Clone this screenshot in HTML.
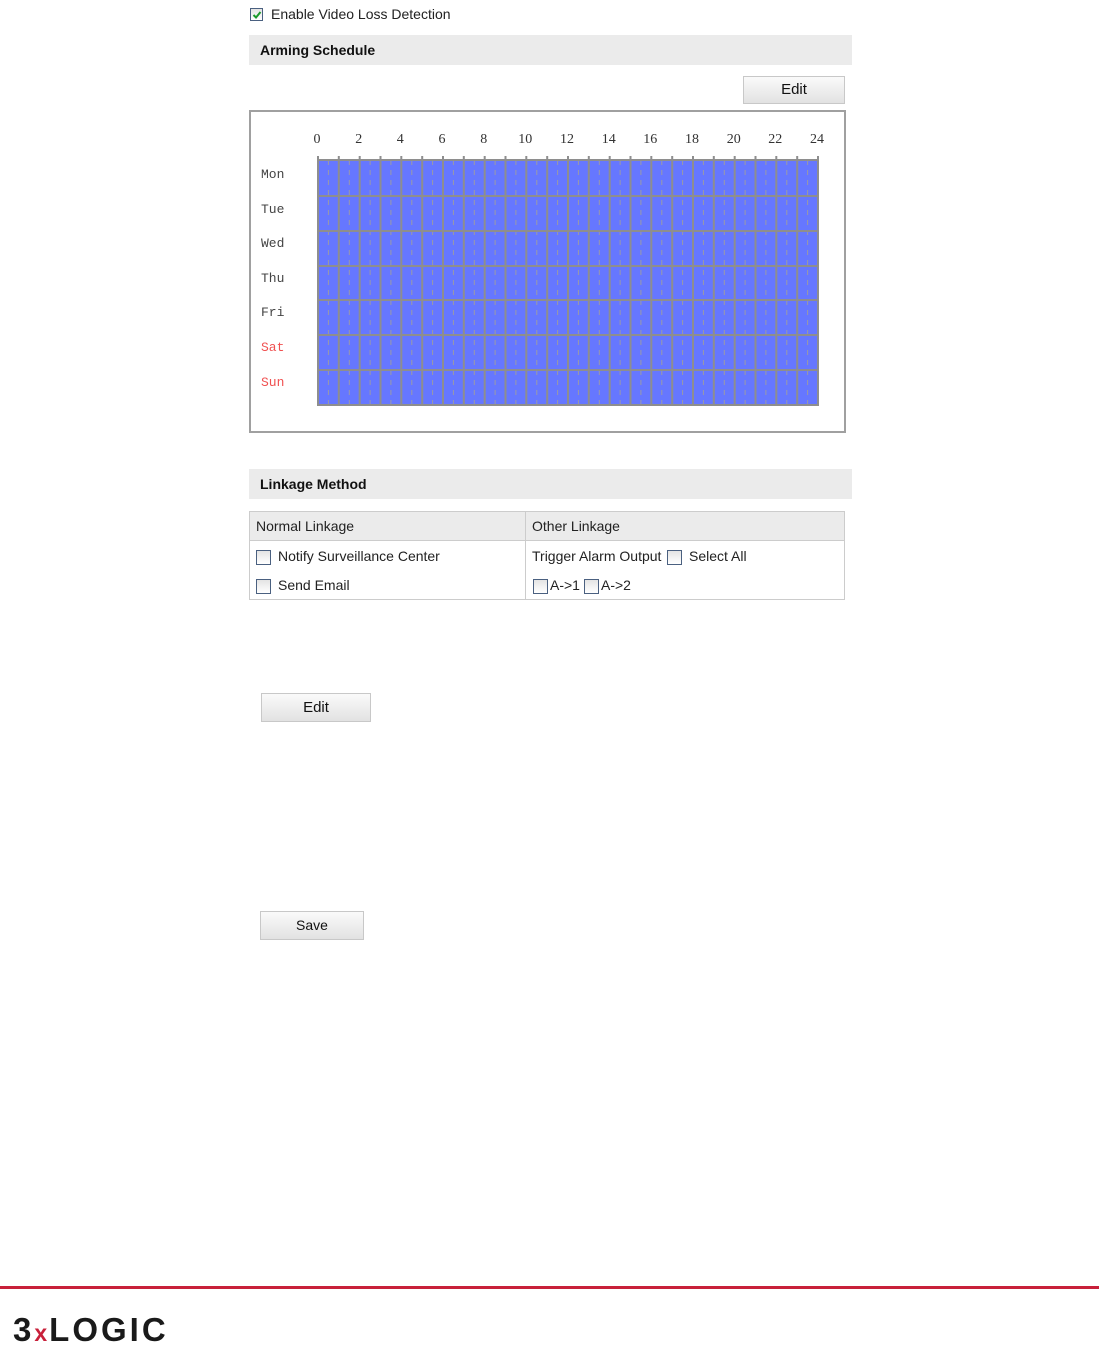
<!DOCTYPE html>
<html><head><meta charset="utf-8">
<style>
body{margin:0;width:1099px;height:1367px;position:relative;background:#fff;font-family:"Liberation Sans",sans-serif;color:#222;overflow:hidden}
.a{position:absolute}
.hdr{position:absolute;left:249px;width:603px;height:30px;background:#ebebeb;font-weight:bold;font-size:14px;line-height:30px;text-indent:11px;color:#111}
.btn{position:absolute;border:1px solid #c8c8c8;background:linear-gradient(#fafafa,#e2e2e2);font-size:15px;text-align:center;color:#111;box-sizing:border-box}
.cb{position:absolute;width:13px;height:13px;border:1px solid #4a6080;background:linear-gradient(#e4e4e4,#fff);box-sizing:border-box}
.t{position:absolute;font-size:14px;color:#222;white-space:nowrap}
</style></head><body>
<div class="cb" style="left:250px;top:8px"></div>
<svg class="a" style="left:251px;top:9px" width="12" height="12"><path d="M2.5 6 L5 8.5 L9.5 3" stroke="#1a9a2a" stroke-width="2" fill="none"/></svg>
<div class="t" style="left:271px;top:6px">Enable Video Loss Detection</div>
<div class="hdr" style="top:35px">Arming Schedule</div>
<div class="btn" style="left:743px;top:76px;width:102px;height:28px;line-height:26px">Edit</div>
<div class="a" style="left:249px;top:110px;width:597px;height:323px;border:2px solid #a0a0a0;box-sizing:border-box"></div>
<svg class="a" style="left:250px;top:120px" width="600" height="300" font-family="Liberation Serif,serif" font-size="14">
<g fill="#333" text-anchor="middle">
<text x="67" y="23">0</text><text x="108.7" y="23">2</text><text x="150.3" y="23">4</text><text x="192" y="23">6</text><text x="233.7" y="23">8</text><text x="275.3" y="23">10</text><text x="317" y="23">12</text><text x="358.7" y="23">14</text><text x="400.3" y="23">16</text><text x="442" y="23">18</text><text x="483.7" y="23">20</text><text x="525.3" y="23">22</text><text x="567" y="23">24</text>
</g>
<g font-size="13" fill="#444" font-family="Liberation Mono,monospace">
<text x="11" y="58">Mon</text><text x="11" y="93">Tue</text><text x="11" y="127">Wed</text><text x="11" y="162">Thu</text><text x="11" y="196">Fri</text>
<text x="11" y="231" fill="#f05050">Sat</text><text x="11" y="266" fill="#f05050">Sun</text>
</g>
<rect x="68" y="40" width="500" height="245" fill="#6677ff"/>
<path stroke="#9a9aa8" stroke-width="1" stroke-dasharray="5,5" fill="none" d="M78.4 40V285M99.3 40V285M120.1 40V285M140.9 40V285M161.8 40V285M182.6 40V285M203.4 40V285M224.3 40V285M245.1 40V285M265.9 40V285M286.8 40V285M307.6 40V285M328.4 40V285M349.3 40V285M370.1 40V285M390.9 40V285M411.8 40V285M432.6 40V285M453.4 40V285M474.3 40V285M495.1 40V285M515.9 40V285M536.8 40V285M557.6 40V285"/>
<path stroke="#8e8e8e" stroke-width="2" fill="none" d="M68 36V285M88.8 36V285M109.7 36V285M130.5 36V285M151.3 36V285M172.2 36V285M193 36V285M213.8 36V285M234.7 36V285M255.5 36V285M276.3 36V285M297.2 36V285M318 36V285M338.8 36V285M359.7 36V285M380.5 36V285M401.3 36V285M422.2 36V285M443 36V285M463.8 36V285M484.7 36V285M505.5 36V285M526.3 36V285M547.2 36V285M568 36V285M67 40H569M67 76H569M67 111H569M67 146H569M67 180H569M67 215H569M67 250H569M67 285H569"/>
</svg>
<div class="hdr" style="top:469px">Linkage Method</div>
<div class="a" style="left:249px;top:511px;width:596px;height:89px;border:1px solid #ccc;box-sizing:border-box"></div>
<div class="a" style="left:250px;top:512px;width:594px;height:28px;background:#ebebeb;border-bottom:1px solid #ccc"></div>
<div class="a" style="left:525px;top:512px;width:1px;height:87px;background:#ccc"></div>
<div class="t" style="left:256px;top:518px">Normal Linkage</div>
<div class="t" style="left:532px;top:518px">Other Linkage</div>
<div class="cb" style="left:256px;top:550px;width:15px;height:15px"></div>
<div class="t" style="left:278px;top:548px">Notify Surveillance Center</div>
<div class="cb" style="left:256px;top:579px;width:15px;height:15px"></div>
<div class="t" style="left:278px;top:577px">Send Email</div>
<div class="t" style="left:532px;top:548px">Trigger Alarm Output</div>
<div class="cb" style="left:667px;top:550px;width:15px;height:15px"></div>
<div class="t" style="left:689px;top:548px">Select All</div>
<div class="cb" style="left:533px;top:579px;width:15px;height:15px"></div>
<div class="t" style="left:550px;top:577px">A-&gt;1</div>
<div class="cb" style="left:584px;top:579px;width:15px;height:15px"></div>
<div class="t" style="left:601px;top:577px">A-&gt;2</div>
<div class="btn" style="left:261px;top:693px;width:110px;height:29px;line-height:27px">Edit</div>
<div class="btn" style="left:260px;top:911px;width:104px;height:29px;line-height:27px;font-size:14px">Save</div>
<div class="a" style="left:0;top:1286px;width:1099px;height:3px;background:#c8203a"></div>
<div class="a" style="left:13px;top:1312px;font-size:33px;font-weight:bold;letter-spacing:3px;color:#1a1a1a;line-height:36px">3<span style="color:#c8203a;font-size:23px;letter-spacing:2px">x</span>LOGIC</div>
</body></html>
